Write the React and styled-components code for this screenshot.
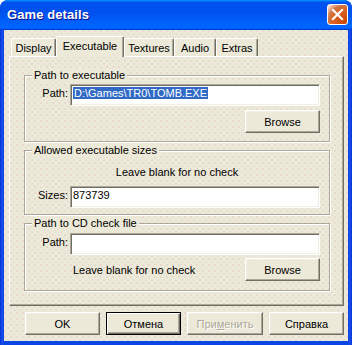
import React from 'react';
import styled, { createGlobalStyle, css } from 'styled-components';

const GlobalStyle = createGlobalStyle`
  html, body {
    margin: 0;
    padding: 0;
    background: #ffffff;
  }
  body {
    font-family: "Liberation Sans", Arial, sans-serif;
    font-size: 11px;
  }
`;

const FACE = '#ECE9D8';

const Window = styled.div`
  width: 352px;
  height: 345px;
  box-sizing: border-box;
  display: flex;
  flex-direction: column;
  border-radius: 8px 8px 0 0;
  overflow: hidden;
  background: linear-gradient(90deg, #0831d9 0px, #1650ea 2px, #0b45e3 4px, #0b45e3 348px, #1650ea 350px, #0831d9 352px);
`;

const TitleBar = styled.div`
  height: 30px;
  flex: none;
  display: flex;
  align-items: center;
  justify-content: space-between;
  padding: 0 4px 1px 7px;
  box-sizing: border-box;
  background: linear-gradient(180deg, #0997ff, #0053ee 8%, #0050ee 40%, #0066ff 88%, #0066ff 93%, #005bff 95%, #003dd7 96%, #003dd7);
`;

const Title = styled.span`
  color: #ffffff;
  font-family: "Liberation Sans", Arial, sans-serif;
  font-weight: bold;
  font-size: 13px;
  letter-spacing: 0.1px;
  text-shadow: 1px 1px #0f1089;
`;

const CloseButton = styled.div`
  width: 21px;
  height: 21px;
  box-sizing: border-box;
  border: 1px solid #ffffff;
  border-radius: 3px;
  display: flex;
  align-items: center;
  justify-content: center;
  background: radial-gradient(circle at 90% 90%, #cc4600 0, #dc6527 55%, #cd7546 70%, #ffccb2 90%, #ffffff 100%);
`;

const Client = styled.div`
  flex: 1;
  margin: 0 4px 4px 4px;
  padding: 6px 4px 0 5px;
  display: flex;
  flex-direction: column;
  background-color: ${FACE};
  background-image:
    radial-gradient(circle at 1px 1px, rgba(222, 190, 190, 0.55) 0.6px, transparent 0.9px),
    radial-gradient(circle at 4px 4px, rgba(200, 200, 200, 0.35) 0.6px, transparent 0.9px);
  background-size: 6px 6px, 6px 6px;
`;

const TabStrip = styled.div`
  display: flex;
  align-items: flex-end;
  height: 20px;
  padding-left: 2px;
`;

const Tab = styled.div`
  position: relative;
  box-sizing: border-box;
  height: 18px;
  display: flex;
  align-items: center;
  justify-content: center;
  padding-top: 1px;
  color: #000;
  font-size: 11px;
  background: ${FACE};
  border-top: 1px solid #ffffff;
  border-left: 1px solid #ffffff;
  border-right: 1px solid #716f64;
  border-radius: 2px 2px 0 0;
  box-shadow: inset -1px 0 #aca899;
  ${(p) =>
    p.$active &&
    css`
      height: 21px;
      margin-bottom: -1px;
      z-index: 1;
      padding-top: 0;
      padding-bottom: 2px;
    `}
`;

const Panel = styled.div`
  width: 335px;
  height: 250px;
  box-sizing: border-box;
  padding: 18px 13px 0 14px;
  border-style: solid;
  border-width: 1px;
  border-color: #ffffff #716f64 #716f64 #ffffff;
  box-shadow: inset -1px -1px #aca899;
  display: flex;
  flex-direction: column;
`;

const Group = styled.div`
  border: 1px solid #aca899;
  box-shadow: inset 1px 1px #ffffff, 1px 1px #ffffff;
  padding: 0 0 ${(p) => p.$pb}px 0;
  margin-top: ${(p) => p.$mt}px;
  display: flex;
  flex-direction: column;
`;

const GroupLabel = styled.div`
  width: fit-content;
  margin: -8px 0 0 7px;
  padding: 0 2px;
  line-height: 14px;
  height: 14px;
  font-size: 11px;
  color: #000;
  background: ${FACE};
`;

const FieldRow = styled.div`
  display: grid;
  grid-template-columns: 45px 250px;
  margin-top: ${(p) => p.$mt}px;
`;

const FieldLabel = styled.label`
  text-align: right;
  padding: 3px 2px 0 0;
  line-height: 13px;
  font-size: 11px;
  color: #000;
`;

const EditBox = styled.div`
  height: 22px;
  box-sizing: border-box;
  background: #ffffff;
  border: 1px solid;
  border-color: #aca899 #ffffff #ffffff #aca899;
  box-shadow: inset 1px 1px #716f64, inset -1px -1px #f1efe2;
  padding: 2px 2px 0 2px;
  font-size: 11px;
  line-height: 13px;
  color: #000;
  white-space: nowrap;
  overflow: hidden;
`;

const Selected = styled.span`
  background: #316ac5;
  color: #ffffff;
  padding: 0 1px;
`;

const Note = styled.div`
  font-size: 11px;
  line-height: 14px;
  color: #000;
  text-align: ${(p) => (p.$center ? 'center' : 'left')};
  margin-top: ${(p) => p.$mt || 0}px;
  padding-left: ${(p) => p.$pl || 0}px;
`;

const ActionRow = styled.div`
  display: flex;
  justify-content: flex-end;
  padding-right: 9px;
  margin-top: ${(p) => p.$mt}px;
`;

const NoteActionRow = styled.div`
  display: grid;
  grid-template-columns: 45px 250px;
  margin-top: ${(p) => p.$mt}px;
`;

const NoteAction = styled.div`
  display: flex;
  align-items: center;
  justify-content: space-between;
`;

const Button = styled.div`
  width: ${(p) => p.$w || 75}px;
  height: 23px;
  box-sizing: border-box;
  display: flex;
  align-items: center;
  justify-content: center;
  font-size: 11px;
  color: #000;
  background: ${FACE};
  border: 1px solid;
  border-color: #ffffff #716f64 #716f64 #ffffff;
  box-shadow: inset -1px -1px #aca899, inset 1px 1px #f1efe2;
  ${(p) =>
    p.$default &&
    css`
      border-color: #000;
      box-shadow: inset 1px 1px #ffffff, inset -1px -1px #716f64, inset -2px -2px #aca899;
    `}
  ${(p) =>
    p.$disabled &&
    css`
      color: #aca899;
      text-shadow: 1px 1px #ffffff;
    `}
`;

const DialogButtons = styled.div`
  display: flex;
  justify-content: flex-end;
  gap: 6px;
  margin-top: 6px;
  width: 335px;
`;

const tabs = [
  { label: 'Display', w: 45 },
  { label: 'Executable', w: 68, active: true },
  { label: 'Textures', w: 50 },
  { label: 'Audio', w: 42 },
  { label: 'Extras', w: 42 },
];

export default function App() {
  return (
    <>
      <GlobalStyle />
      <Window>
        <TitleBar>
          <Title>Game details</Title>
          <CloseButton>
            <svg width="13" height="13" viewBox="0 0 13 13">
              <path d="M2 2 L11 11 M11 2 L2 11" stroke="#ffffff" strokeWidth="2.2" strokeLinecap="square" />
            </svg>
          </CloseButton>
        </TitleBar>
        <Client>
          <TabStrip>
            {tabs.map((t) => (
              <Tab key={t.label} $active={t.active} style={{ width: t.w }}>
                {t.label}
              </Tab>
            ))}
          </TabStrip>
          <Panel>
            <Group $mt={0} $pb={8}>
              <GroupLabel>Path to executable</GroupLabel>
              <FieldRow $mt={2}>
                <FieldLabel>Path:</FieldLabel>
                <EditBox>
                  <Selected>D:\Games\TR0\TOMB.EXE</Selected>
                </EditBox>
              </FieldRow>
              <ActionRow $mt={4}>
                <Button>Browse</Button>
              </ActionRow>
            </Group>
            <Group $mt={8} $pb={6}>
              <GroupLabel>Allowed executable sizes</GroupLabel>
              <Note $center $mt={8}>Leave blank for no check</Note>
              <FieldRow $mt={7}>
                <FieldLabel>Sizes:</FieldLabel>
                <EditBox>873739</EditBox>
              </FieldRow>
            </Group>
            <Group $mt={8} $pb={9}>
              <GroupLabel>Path to CD check file</GroupLabel>
              <FieldRow $mt={3}>
                <FieldLabel>Path:</FieldLabel>
                <EditBox />
              </FieldRow>
              <NoteActionRow $mt={3}>
                <span />
                <NoteAction>
                  <Note $pl={3}>Leave blank for no check</Note>
                  <Button>Browse</Button>
                </NoteAction>
              </NoteActionRow>
            </Group>
          </Panel>
          <DialogButtons>
            <Button>OK</Button>
            <Button $default>Отмена</Button>
            <Button $disabled $w={76}>
              <span>
                При<u>м</u>енить
              </span>
            </Button>
            <Button>Справка</Button>
          </DialogButtons>
        </Client>
      </Window>
    </>
  );
}
